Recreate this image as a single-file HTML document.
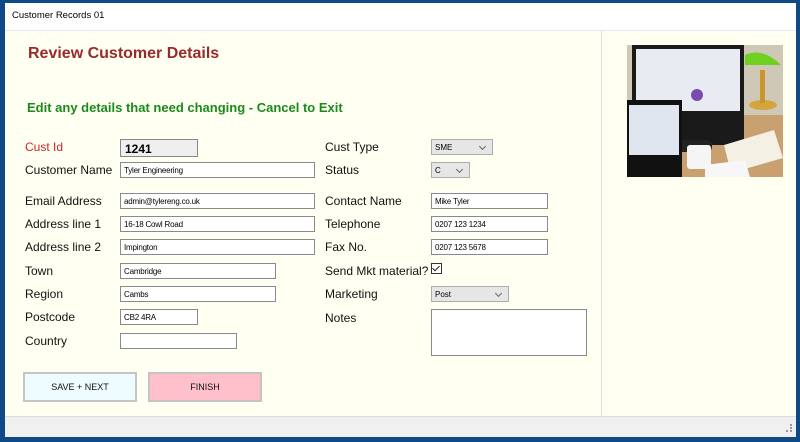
<!DOCTYPE html>
<html><head><style>
*{margin:0;padding:0;box-sizing:border-box}
body{width:800px;height:442px;background:#0f4a86;position:relative;overflow:hidden;font-family:"Liberation Sans",Arial,sans-serif}
.a{position:absolute}
.win{left:5px;top:3px;width:791px;height:434px;background:#fffff2}
.title{left:5px;top:3px;width:791px;height:28px;background:#fff;border-bottom:1px solid #e6e6e6;font-size:9.5px;padding:7px 0 0 7px;color:#000}
.lbl{font-size:12px;color:#111}
.inp{background:#fff;border:1px solid #8a8a8a;height:16px;font-size:8px;padding:3px 0 0 3px;color:#000;letter-spacing:-0.2px}
.sel{background:#e6e6e6;border:1px solid #adadad;height:16px;font-size:8px;padding:3px 0 0 3px;color:#000}
.sel::after{content:"";position:absolute;right:7px;top:4px;width:4px;height:4px;border-right:1px solid #666;border-bottom:1px solid #666;transform:rotate(45deg)}
.btn{border:2px solid #c4c4c4;font-size:9px;text-align:center;line-height:26px;height:30px;width:114px;color:#111}
</style></head><body>
<div class="a win"></div>
<div class="a title">Customer Records 01</div>
<div class="a" style="left:601px;top:31px;width:1px;height:386px;background:#ddd"></div>
<div class="a" style="left:5px;top:416px;width:791px;height:21px;background:#f0f0f0;border-top:1px solid #ddd"></div>
<div class="a" style="left:786px;top:424px;width:6px;height:8px;border-right:2px dotted #999;border-bottom:2px dotted #999"></div>
<div class="a" style="left:28px;top:45px;font-size:16px;font-weight:bold;color:#9a2a2a">Review Customer Details</div>
<div class="a" style="left:27px;top:100px;font-size:13px;font-weight:bold;color:#1c8a1c">Edit any details that need changing - Cancel to Exit</div>

<div class="a lbl" style="left:25px;top:140px;color:#c8282a">Cust Id</div>
<div class="a" style="left:120px;top:139px;width:78px;height:18px;background:#efefef;border:1px solid #888;font-size:12px;font-weight:bold;padding:2px 0 0 4px">1241</div>
<div class="a lbl" style="left:25px;top:163px">Customer Name</div>
<div class="a inp" style="left:120px;top:162px;width:195px">Tyler Engineering</div>
<div class="a lbl" style="left:25px;top:194px">Email Address</div>
<div class="a inp" style="left:120px;top:193px;width:195px">admin@tylereng.co.uk</div>
<div class="a lbl" style="left:25px;top:217px">Address line 1</div>
<div class="a inp" style="left:120px;top:216px;width:195px">16-18 Cowl Road</div>
<div class="a lbl" style="left:25px;top:240px">Address line 2</div>
<div class="a inp" style="left:120px;top:239px;width:195px">Impington</div>
<div class="a lbl" style="left:25px;top:264px">Town</div>
<div class="a inp" style="left:120px;top:263px;width:156px">Cambridge</div>
<div class="a lbl" style="left:25px;top:287px">Region</div>
<div class="a inp" style="left:120px;top:286px;width:156px">Cambs</div>
<div class="a lbl" style="left:25px;top:310px">Postcode</div>
<div class="a inp" style="left:120px;top:309px;width:78px">CB2 4RA</div>
<div class="a lbl" style="left:25px;top:334px">Country</div>
<div class="a inp" style="left:120px;top:333px;width:117px"></div>

<div class="a lbl" style="left:325px;top:140px">Cust Type</div>
<div class="a sel" style="left:431px;top:139px;width:62px">SME</div>
<div class="a lbl" style="left:325px;top:163px">Status</div>
<div class="a sel" style="left:431px;top:162px;width:39px">C</div>
<div class="a lbl" style="left:325px;top:194px">Contact Name</div>
<div class="a inp" style="left:431px;top:193px;width:117px">Mike Tyler</div>
<div class="a lbl" style="left:325px;top:217px">Telephone</div>
<div class="a inp" style="left:431px;top:216px;width:117px">0207 123 1234</div>
<div class="a lbl" style="left:325px;top:240px">Fax No.</div>
<div class="a inp" style="left:431px;top:239px;width:117px">0207 123 5678</div>
<div class="a lbl" style="left:325px;top:264px">Send Mkt material?</div>
<div class="a" style="left:431px;top:263px;width:11px;height:11px;border:1px solid #333;background:#fff"></div>
<div class="a" style="left:434px;top:264px;width:4px;height:7px;border-right:1.5px solid #222;border-bottom:1.5px solid #222;transform:rotate(45deg)"></div>
<div class="a lbl" style="left:325px;top:287px">Marketing</div>
<div class="a sel" style="left:431px;top:286px;width:78px">Post</div>
<div class="a lbl" style="left:325px;top:311px">Notes</div>
<div class="a inp" style="left:431px;top:309px;width:156px;height:47px"></div>

<div class="a btn" style="left:23px;top:372px;background:#eefcff">SAVE + NEXT</div>
<div class="a btn" style="left:148px;top:372px;background:#ffc0cb">FINISH</div>

<svg class="a" style="left:627px;top:45px" width="156" height="132" viewBox="0 0 156 132">
<rect width="156" height="132" fill="#c9a070"/>
<rect x="0" y="0" width="156" height="70" fill="#cfc8b6"/>
<rect x="5" y="0" width="112" height="100" fill="#1a1a1a"/>
<rect x="9" y="4" width="104" height="62" fill="#e8ecf2"/>
<circle cx="70" cy="50" r="6" fill="#7a4ab0"/>
<rect x="45" y="95" width="40" height="12" rx="5" fill="#222"/>
<rect x="0" y="55" width="55" height="77" fill="#111"/>
<rect x="2" y="60" width="50" height="50" fill="#dfe6f0"/>
<path d="M118 10 q18 -8 36 10 l-36 0z" fill="#6fd020"/>
<ellipse cx="136" cy="60" rx="14" ry="5" fill="#d4a53a"/>
<rect x="133" y="25" width="5" height="33" fill="#c9962e"/>
<path d="M97 100 l50 -15 l9 28 l-52 15z" fill="#f4f0e4"/>
<rect x="60" y="100" width="24" height="24" rx="3" fill="#f5f5f5"/>
<path d="M78 120 l40 -5 l5 17 l-45 0z" fill="#f7f7f7"/>
</svg>
</body></html>
